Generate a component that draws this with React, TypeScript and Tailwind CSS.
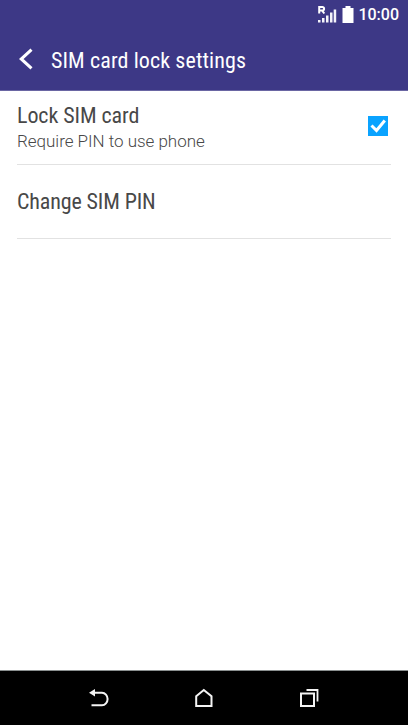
function StatusBar() {
  return (
    <div className="flex h-[30px] items-center justify-end pr-[9px]">
      <svg className="mr-[5px] mb-[2px] h-[18px] w-[19px]" viewBox="0 0 19 18" fill="none">
        <path d="M1.200 8.500V2h3.200a1.700 1.700 0 0 1 0 3.400H1.200M4 5.400l2.300 3.100" stroke="#fff" strokeWidth="2" />
        <path d="M0 15h2.500v2.500H0zM4 13h2.500v4.500H4zM8 10.500h2.500v7H8zM12 7.500h2.500v10H12zM15.700 4.500h2.500v13h-2.500z" fill="#f4f3fa" />
      </svg>
      <svg className="mr-[4px] mb-[2px] h-[17px] w-[12px]" viewBox="0 0 12 17">
        <path d="M3.500 0h5v2H11.500v15H.5V2h3z" fill="#fff" />
      </svg>
      <span className="text-[16px] leading-[30px] font-medium">10:00</span>
    </div>
  );
}

export default function App() {
  return (
    <div className="flex h-[725px] w-[408px] flex-col bg-white font-['Roboto',sans-serif] text-[#484848]">
      <header className="h-[91px] border-b border-[#6a66a3] bg-[#3d3886] text-white">
        <StatusBar />
        <div className="flex h-[60px] items-center pl-[19px]">
          <svg className="mb-[2px] h-[22px] w-[14px]" viewBox="0 0 14 22" fill="none">
            <path d="M12.500 1.700 2.200 11l10.300 9.300" stroke="#fff" strokeWidth="3.100" />
          </svg>
          <h1 className="ml-[18px] pt-[2px] font-['Roboto_Condensed','Roboto',sans-serif] text-[22px] leading-[30px] tracking-[0.1px] whitespace-nowrap [font-stretch:75%]">
            SIM card lock settings
          </h1>
        </div>
      </header>
      <main className="flex-1 px-[17px]">
        <div className="flex h-[74px] items-center justify-between border-b border-[#e2e2e2]">
          <div className="flex flex-col">
            <span className="font-['Roboto_Condensed','Roboto',sans-serif] text-[22px] leading-[26px] tracking-[-0.08px] whitespace-nowrap [font-stretch:75%]">Lock SIM card</span>
            <span className="text-[17px] leading-[24px] font-light tracking-[-0.02px] whitespace-nowrap">Require PIN to use phone</span>
          </div>
          <svg className="mr-[3px] mb-[4px] h-5 w-5" viewBox="0 0 20 20" fill="none">
            <path d="M0 0h20v20H0z" fill="#0aa3ff" />
            <path d="m3.500 9.500 5 5L16.800 4.500" stroke="#fff" strokeWidth="3" />
          </svg>
        </div>
        <div className="flex h-[74px] items-center border-b border-[#e2e2e2]">
          <span className="font-['Roboto_Condensed','Roboto',sans-serif] text-[22px] leading-[26px] tracking-[-0.13px] whitespace-nowrap [font-stretch:75%]">Change SIM PIN</span>
        </div>
      </main>
      <nav className="flex h-[55px] items-center border-t border-[#8a8f8f] bg-black pl-[88px]">
        <svg className="h-[22px] w-[22px]" viewBox="0 0 22 22" fill="none">
          <path d="M5 5.700h9a5.600 6.300 0 0 1 0 12.600H3.500" stroke="#f4f4f4" strokeWidth="2" />
          <path d="M1 5.700 7 2v7.500z" fill="#f4f4f4" />
        </svg>
        <svg className="ml-[84px] h-[22px] w-[20px]" viewBox="0 0 20 22" fill="none">
          <path d="M2.200 9.300 9.800 3l7.700 6.300V19H2.200z" stroke="#f4f4f4" strokeWidth="2" />
        </svg>
        <svg className="ml-[85px] h-[22px] w-[22px]" viewBox="0 0 22 22" fill="none">
          <path d="M2 6.500h13V19H2z" stroke="#f4f4f4" strokeWidth="2" />
          <path d="M7.500 3H18.500v11.500" stroke="#f4f4f4" strokeWidth="1.800" />
        </svg>
      </nav>
    </div>
  );
}
